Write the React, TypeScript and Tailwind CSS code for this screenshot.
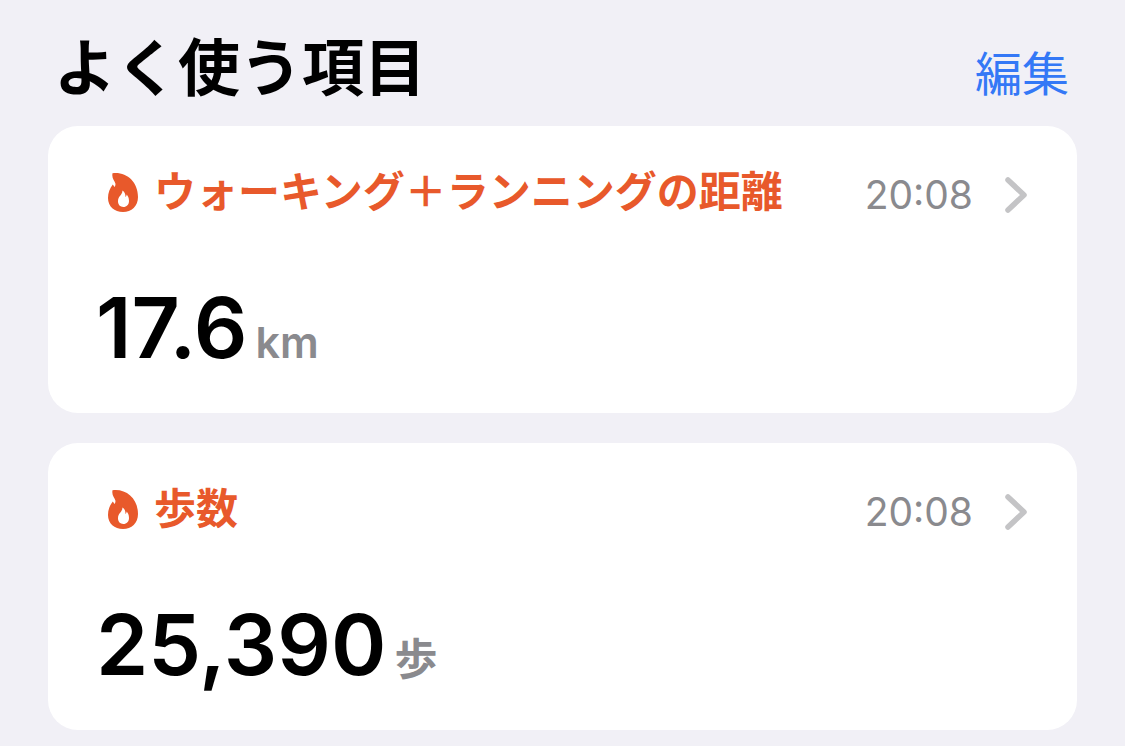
import React from 'react';

type Metric = {
  id: string;
  label: string;
  time: string;
  value: string;
  unit: string;
};

const metrics: Metric[] = [
  { id: 'distance', label: 'ウォーキング\uff0bランニングの距離', time: '20:08', value: '17.6', unit: 'km' },
  { id: 'steps', label: '歩数', time: '20:08', value: '25,390', unit: '歩' },
];

function FlameIcon() {
  return (
    <svg viewBox="0 0 30 39" className="h-[39px] w-[30px] shrink-0" aria-hidden="true">
      <path
        fill="#e8592b"
        fillRule="evenodd"
        d="M4.500 0.300C18 -1.500 30 8.500 30 24C30 33 23.500 39 15 39C6.500 39 0 33.500 0 25C0 19.500 1.800 15.500 4.800 11.500C5.500 12.300 6 13 6.300 14C7.300 13 7.700 11.800 7.300 10.300C6.500 7.500 3.500 5 4.500 0.300ZM14.300 17.500C15 21.500 10 23 10 28.300C10 31.800 12.200 34 15.300 34C18.700 34 21 31.600 21 28C21 25 19.800 23 18.700 21.600C18.600 22.600 18.200 23.500 17.400 24.200C17.700 21.500 16.800 18.800 14.300 17.500Z"
      />
    </svg>
  );
}

function ChevronIcon() {
  return (
    <svg viewBox="0 0 22 36" className="h-9 w-[22px] shrink-0" fill="none" aria-hidden="true">
      <path d="M3 3L19 18L3 33" stroke="#c4c4c6" strokeWidth="5.5" strokeLinecap="round" strokeLinejoin="round" />
    </svg>
  );
}

function MetricCard({ metric }: { metric: Metric }) {
  return (
    <button type="button" className="block w-full rounded-[30px] bg-white pt-9 pr-[50px] pb-[38px] pl-12 text-left">
      <span className="flex h-[66px] items-center">
        <span className="flex flex-1 items-center gap-4 pb-1.5 pl-3 text-[42px] leading-[58px] font-bold text-[#e8592b]">
          <FlameIcon />
          {metric.label}
        </span>
        <span className="mr-8 text-[39px] text-[#8a8a8e]">{metric.time}</span>
        <ChevronIcon />
      </span>
      <span className="mt-13 flex h-[95px] items-baseline gap-2">
        <span className="text-[84px] leading-[95px] font-semibold text-black">{metric.value}</span>
        <span className="text-[43px] leading-none font-semibold text-[#8a8a8e]">{metric.unit}</span>
      </span>
    </button>
  );
}

export default function App() {
  return (
    <main
      lang="ja"
      className="min-h-screen bg-[#f1f0f6] px-12 pb-4 font-['Inter','Noto_Sans_CJK_JP',sans-serif]"
    >
      <header className="flex h-[126px] items-baseline justify-between pt-[22px] pr-2 pl-1.5">
        <h1 className="text-[62px] font-bold text-black">よく使う項目</h1>
        <button type="button" className="text-[47px] font-normal text-[#3478f6]">
          編集
        </button>
      </header>
      <section className="flex flex-col gap-[30px]">
        {metrics.map((metric) => (
          <MetricCard key={metric.id} metric={metric} />
        ))}
      </section>
    </main>
  );
}
